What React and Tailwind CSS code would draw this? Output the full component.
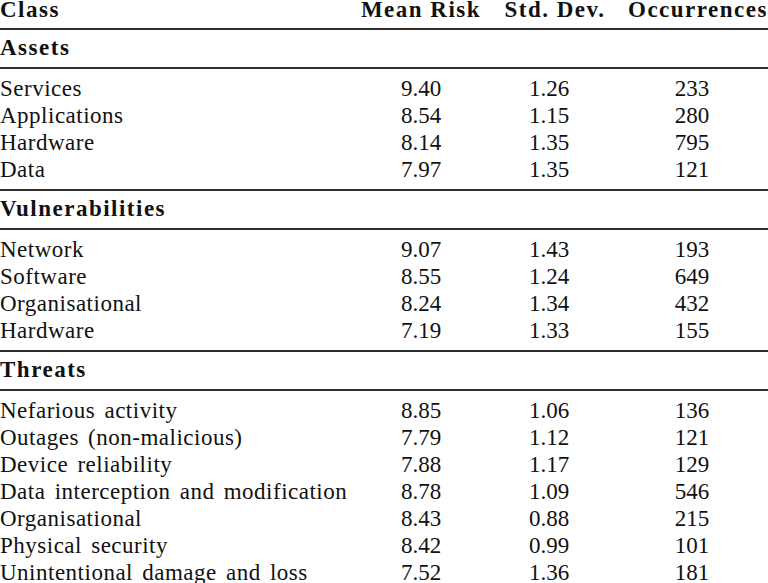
import React from "react";

const sections = [
  {
    title: "Assets",
    rows: [
      ["Services", "9.40", "1.26", "233"],
      ["Applications", "8.54", "1.15", "280"],
      ["Hardware", "8.14", "1.35", "795"],
      ["Data", "7.97", "1.35", "121"],
    ],
  },
  {
    title: "Vulnerabilities",
    rows: [
      ["Network", "9.07", "1.43", "193"],
      ["Software", "8.55", "1.24", "649"],
      ["Organisational", "8.24", "1.34", "432"],
      ["Hardware", "7.19", "1.33", "155"],
    ],
  },
  {
    title: "Threats",
    rows: [
      ["Nefarious activity", "8.85", "1.06", "136"],
      ["Outages (non-malicious)", "7.79", "1.12", "121"],
      ["Device reliability", "7.88", "1.17", "129"],
      ["Data interception and modification", "8.78", "1.09", "546"],
      ["Organisational", "8.43", "0.88", "215"],
      ["Physical security", "8.42", "0.99", "101"],
      ["Unintentional damage and loss", "7.52", "1.36", "181"],
    ],
  },
];

function Rule({ className = "" }) {
  return <div className={"h-[2px] bg-[#2e2e2e] " + className} />;
}

function DataRow({ r }) {
  return (
    <div className="grid grid-cols-[360px_122px_146px_140px] h-[27px] leading-[27px] whitespace-nowrap">
      <div className="tracking-[0.5px] [word-spacing:3px]">{r[0]}</div>
      <div className="text-center">{r[1]}</div>
      <div className="text-center pr-[12px]">{r[2]}</div>
      <div className="text-center pr-[12px]">{r[3]}</div>
    </div>
  );
}

export default function App() {
  return (
    <div className="w-[768px] h-[583px] overflow-hidden bg-white text-[#111] font-['Liberation_Serif',serif] text-[23px]">
      <div className="grid grid-cols-[360px_122px_146px_140px] h-[23px] leading-[19px] font-bold tracking-[1.5px] whitespace-nowrap">
        <div>Class</div>
        <div className="text-center">Mean Risk</div>
        <div className="text-center">Std. Dev.</div>
        <div className="text-center">Occurrences</div>
      </div>
      <Rule className="mt-[5px]" />
      {sections.map((s, i) => (
        <div key={s.title}>
          <div className="mt-[4px] h-[27px] leading-[27px] font-bold tracking-[1.5px]">
            {s.title}
          </div>
          <Rule className="mt-[6px]" />
          <div className="mt-[6px]">
            {s.rows.map((r, j) => (
              <DataRow key={j} r={r} />
            ))}
          </div>
          {i < sections.length - 1 && <Rule className="mt-[6px]" />}
        </div>
      ))}
    </div>
  );
}
